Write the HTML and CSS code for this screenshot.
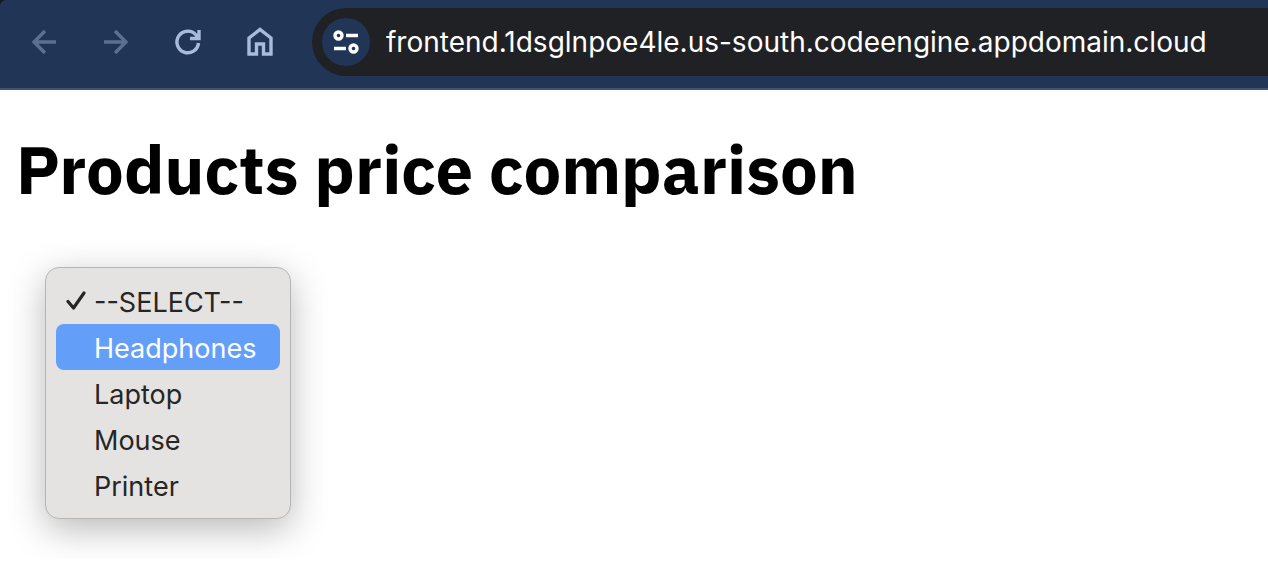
FILE: index.html
```html
<!DOCTYPE html>
<html lang="en">
<head>
<meta charset="utf-8">
<meta name="viewport" content="width=device-width, initial-scale=1">
<title>Products price comparison</title>
<link rel="stylesheet" href="styles.css">
</head>
<body>
<header class="frame">
  <div class="toolbar">
    <nav class="nav" aria-label="Browser">
      <button class="nav-button" type="button" aria-label="Back" disabled>
        <svg viewBox="0 0 32 32"><path d="M28 16H6M17 5 6 16l11 11"/></svg>
      </button>
      <button class="nav-button" type="button" aria-label="Forward" disabled>
        <svg viewBox="0 0 32 32"><path d="M4 16h22M15 5l11 11-11 11"/></svg>
      </button>
      <button class="nav-button" type="button" aria-label="Reload">
        <svg viewBox="0 0 32 32"><path d="M26.500 17A10.800 10.800 0 1 1 24 9l3 3M27 4v8.500h-9"/></svg>
      </button>
      <button class="nav-button" type="button" aria-label="Home">
        <svg viewBox="0 0 32 32"><path d="M5 28V12L16 3.500 27 12v16h-7.500V18h-7v10z"/></svg>
      </button>
    </nav>
    <div class="address">
      <button class="site-info" type="button" aria-label="View site information">
        <svg viewBox="0 0 32 32"><circle cx="8.500" cy="9.500" r="3.500"/><path d="M16 9.500h12M4 22.500h12"/><circle cx="23.500" cy="22.500" r="3.500"/></svg>
      </button>
      <input class="url" type="text" aria-label="Address" spellcheck="false" value="frontend.1dsglnpoe4le.us-south.codeengine.appdomain.cloud">
    </div>
  </div>
</header>
<main class="page">
  <h1 class="title">Products price comparison</h1>
  <select class="menu" size="5" aria-label="Product">
    <option class="item" selected>--SELECT--</option>
    <option class="item item-active">Headphones</option>
    <option class="item">Laptop</option>
    <option class="item">Mouse</option>
    <option class="item">Printer</option>
  </select>
</main>
</body>
</html>
```
FILE: styles.css
```css
* {
  box-sizing: border-box;
}

body {
  margin: 0;
  background: #fff;
  color: #000;
  font-family: Inter, "Liberation Sans", sans-serif;
}

.frame {
  background: #0f1826;
}

.toolbar {
  display: flex;
  align-items: center;
  gap: 36px;
  padding: 8px 0 12px 28px;
  border-bottom: 2px solid #3d5275;
  border-top-left-radius: 6px;
  background: #213557;
}

.nav {
  display: flex;
  gap: 40px;
}

.nav-button,
.site-info {
  display: flex;
  align-items: center;
  justify-content: center;
  padding: 0;
  border: 0;
  background: none;
}

.nav-button {
  color: #a9bbdd;
}

.nav-button:disabled {
  color: #5c7091;
}

.nav-button svg,
.site-info svg {
  width: 32px;
  height: 32px;
  fill: none;
  stroke: currentColor;
  stroke-width: 3.4;
}

.address {
  display: flex;
  flex: 1;
  align-items: center;
  gap: 16px;
  min-width: 0;
  height: 68px;
  padding-left: 10px;
  border-radius: 34px 0 0 34px;
  background: #202124;
}

.site-info {
  flex: none;
  width: 48px;
  height: 48px;
  border-radius: 50%;
  background: #213557;
  color: #fff;
}

.url {
  flex: 1;
  min-width: 0;
  padding: 0;
  border: 0;
  outline: 0;
  background: none;
  color: #fff;
  font: 400 28px/40px Inter, "Liberation Sans", sans-serif;
}

.page {
  padding: 39px 16px;
}

.title {
  margin: 0 0 58px;
  font: 700 67px/80px "IBM Plex Sans", Roboto, "Liberation Sans", sans-serif;
}

.menu {
  display: block;
  appearance: none;
  width: 246px;
  height: auto;
  margin-left: 29px;
  padding: 10px;
  overflow: hidden;
  border: 1px solid #b5b5b5;
  border-radius: 14px;
  outline: 0;
  background: #e4e3e1;
  box-shadow: 0 10px 36px rgb(0 0 0 / 28%);
  color: #262626;
  font: 400 27px/46px Inter, "Liberation Sans", sans-serif;
}

.item {
  height: 46px;
  min-height: 46px;
  padding: 8px 0 0 38px;
  border-radius: 8px;
  color: #262626;
}

.item:checked {
  background:
    url("data:image/svg+xml,%3Csvg xmlns='http://www.w3.org/2000/svg' width='20' height='20' fill='none' stroke='%23262626' stroke-width='3.200' stroke-linecap='round' stroke-linejoin='round'%3E%3Cpath d='M2 10.500l5.500 6.500L18 2'/%3E%3C/svg%3E") 10px 13px no-repeat,
    linear-gradient(#e4e3e1, #e4e3e1);
}

.item-active {
  background: #639ff8;
  color: #fff;
}
```
